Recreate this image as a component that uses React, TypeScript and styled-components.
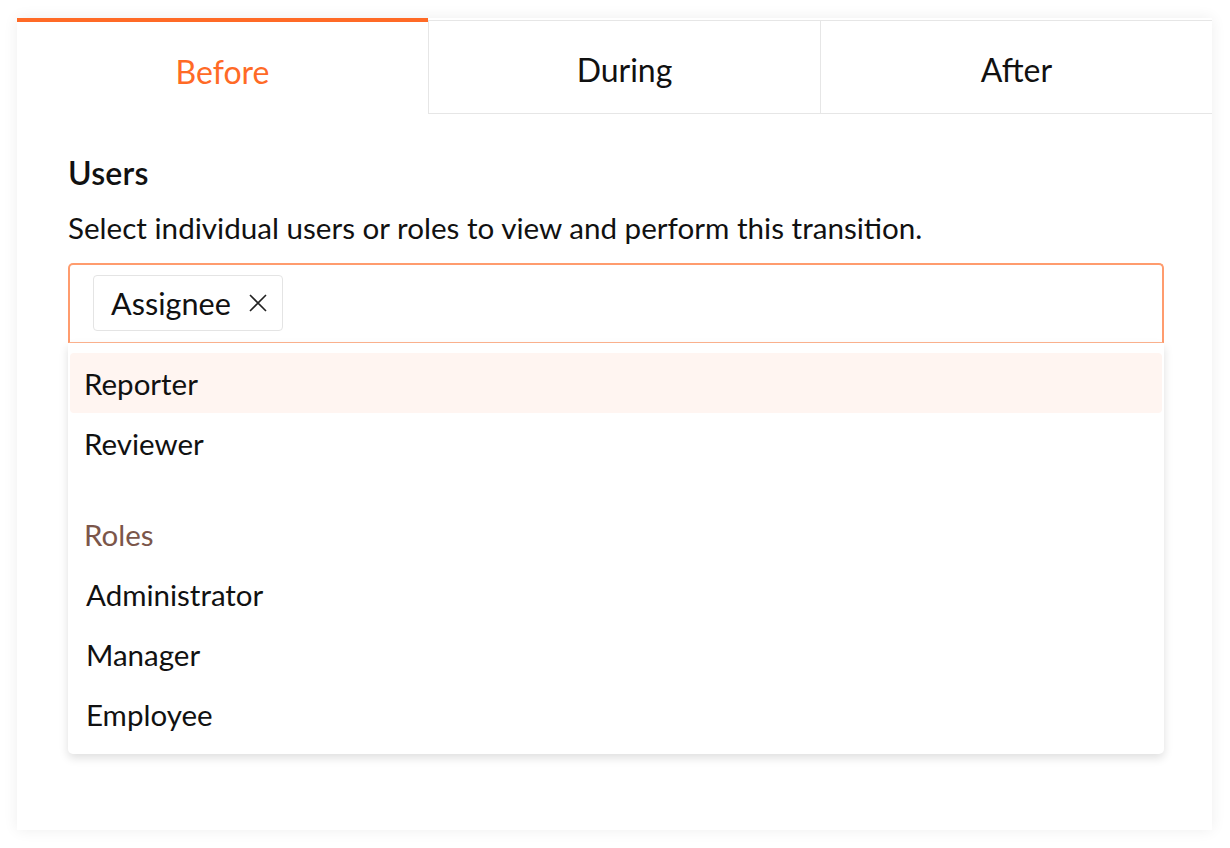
import React, { useState } from 'react';
import styled, { createGlobalStyle } from 'styled-components';

const GlobalStyle = createGlobalStyle`
    html, body {
        margin: 0;
        padding: 0;
        background: #ffffff;
        font-family: Lato, "Open Sans", sans-serif;
        color: #111111;
    }
    * {
        box-sizing: border-box;
    }
`;

const Page = styled.div`
    padding: 18px 18px 18px 17px;
`;

const Card = styled.div`
    width: 1195px;
    height: 812px;
    background: #ffffff;
    box-shadow: 0 0 14px rgba(0, 0, 0, 0.07);
`;

const TabBar = styled.div`
    display: flex;
    height: 96px;
`;

const Tab = styled.button<{ $active?: boolean; $width: number }>`
    width: ${({ $width }) => $width}px;
    border: none;
    background: #ffffff;
    font-family: inherit;
    font-size: 32px;
    cursor: pointer;
    padding: ${({ $active }) => ($active ? '6px' : '4px')} 0 0;
    color: ${({ $active }) => ($active ? '#ff6a26' : '#111111')};
    border-top: ${({ $active }) => ($active ? '4px solid #ff6a26' : '1px solid #e6e6e6')};
    margin-top: ${({ $active }) => ($active ? '0' : '2px')};
    border-left: ${({ $active }) => ($active ? 'none' : '1px solid #e6e6e6')};
    border-bottom: ${({ $active }) => ($active ? 'none' : '1px solid #e6e6e6')};
`;

const Body = styled.div`
    padding: 42px 48px 0 51px;
`;

const Heading = styled.h2`
    margin: 0;
    font-size: 32px;
    font-weight: 600;
    line-height: 34px;
    letter-spacing: 0.2px;
`;

const Description = styled.p`
    margin: 21px 0 0;
    font-size: 29.6px;
    line-height: 34px;
`;

const Field = styled.div`
    margin-top: 18px;
    width: 1096px;
`;

const Input = styled.div`
    height: 80px;
    border: 2px solid #ff9c6e;
    border-bottom: 1px solid #ffb48f;
    border-radius: 5px 5px 0 0;
    padding: 10px 23px;
    display: flex;
    align-items: flex-start;
`;

const Chip = styled.div`
    height: 56px;
    display: inline-flex;
    align-items: center;
    gap: 18px;
    padding: 0 15px 0 17px;
    border: 1px solid #e4e4e4;
    border-radius: 4px;
    font-size: 30.6px;
`;

const ChipClose = styled.button`
    border: none;
    background: none;
    padding: 0;
    display: flex;
    cursor: pointer;
`;

const Dropdown = styled.div`
    background: #ffffff;
    padding: 10px 2px 10px;
    border-radius: 0 0 5px 5px;
    box-shadow: 0 4px 10px rgba(0, 0, 0, 0.13);
`;

const Option = styled.div<{ $highlighted?: boolean; $indent?: number }>`
    height: 60px;
    display: flex;
    align-items: center;
    padding-left: ${({ $indent }) => 14 + ($indent ?? 0)}px;
    font-size: 29.5px;
    border-radius: 4px;
    background: ${({ $highlighted }) => ($highlighted ? '#fff5f1' : 'transparent')};
    cursor: pointer;
`;

const GroupLabel = styled.div`
    height: 60px;
    margin-top: 31px;
    display: flex;
    align-items: center;
    padding-left: 14px;
    font-size: 29.5px;
    color: #7b564a;
`;

const tabs = [
    { label: 'Before', width: 411 },
    { label: 'During', width: 392 },
    { label: 'After', width: 392 },
];

const users = ['Reporter', 'Reviewer'];
const roles = ['Administrator', 'Manager', 'Employee'];

const App: React.FC = () => {
    const [active, setActive] = useState('Before');

    return (
        <Page>
            <GlobalStyle />
            <Card>
                <TabBar>
                    {tabs.map((t) => (
                        <Tab
                            key={t.label}
                            $width={t.width}
                            $active={active === t.label}
                            onClick={() => setActive(t.label)}
                        >
                            {t.label}
                        </Tab>
                    ))}
                </TabBar>
                <Body>
                    <Heading>Users</Heading>
                    <Description>
                        Select individual users or roles to view and perform this transition.
                    </Description>
                    <Field>
                        <Input>
                            <Chip>
                                Assignee
                                <ChipClose aria-label="Remove">
                                    <svg width="18" height="18" viewBox="0 0 18 18">
                                        <path
                                            d="M1 1 L17 17 M17 1 L1 17"
                                            stroke="#222"
                                            strokeWidth="1.6"
                                            fill="none"
                                        />
                                    </svg>
                                </ChipClose>
                            </Chip>
                        </Input>
                        <Dropdown>
                            {users.map((u, i) => (
                                <Option key={u} $highlighted={i === 0}>
                                    {u}
                                </Option>
                            ))}
                            <GroupLabel>Roles</GroupLabel>
                            {roles.map((r) => (
                                <Option key={r} $indent={2}>
                                    {r}
                                </Option>
                            ))}
                        </Dropdown>
                    </Field>
                </Body>
            </Card>
        </Page>
    );
};

export default App;
